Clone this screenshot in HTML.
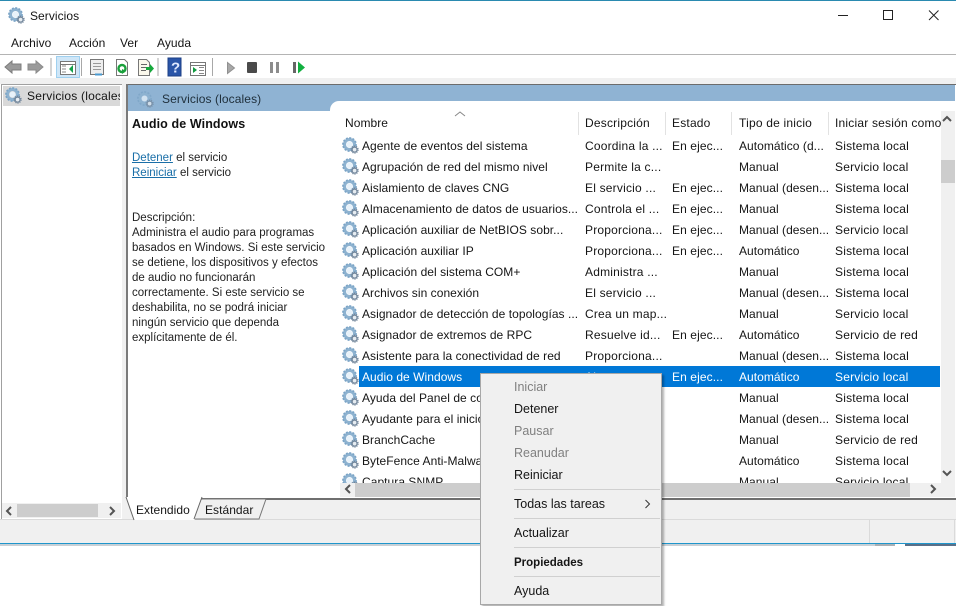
<!DOCTYPE html>
<html lang="es"><head><meta charset="utf-8"><title>Servicios</title>
<style>
html,body{margin:0;padding:0;background:#fff}
#p{position:relative;width:956px;height:606px;overflow:hidden;background:#fff;font-family:"Liberation Sans",sans-serif;font-size:12px;color:#151515;letter-spacing:.05px}
#p div,#p span.a,#p svg{position:absolute}
.t{white-space:nowrap;line-height:16px;height:16px}
.b{background:#f0f0f0}
.r{left:0;width:941px;height:21px}
.r span{position:absolute;top:3px;line-height:16px;white-space:nowrap}
.n{left:362px}.d{left:585px;letter-spacing:.2px}.s{left:672px;letter-spacing:.1px}.i{left:739px}.l{left:835px;letter-spacing:.2px}
.h{letter-spacing:.2px}
.sel{color:#fff}
.dsc{font-size:11.5px;letter-spacing:0;color:#222}
.dsc u{color:#1a6fa8}
.m{left:514px;white-space:nowrap;line-height:16px;font-size:12.5px;letter-spacing:0}
.g{color:#808080}
.sp{left:514px;width:146px;height:1px;background:#d0d0d0}
</style></head><body><div id="p">
<svg width="0" height="0" style="left:0;top:0"><defs>
<symbol id="gear" viewBox="0 0 17 17">
<circle cx="7.5" cy="7.5" r="5" fill="none" stroke="#8db2d0" stroke-width="3"/>
<circle cx="7.5" cy="7.5" r="6.6" fill="none" stroke="#7ba4c6" stroke-width="1.6" stroke-dasharray="2 1.4"/>
<circle cx="7.5" cy="7.5" r="3" fill="#e8f2fa"/>
<circle cx="12.6" cy="12.6" r="2.5" fill="#e6ecf1" stroke="#71859a" stroke-width="1.3"/>
<circle cx="12.6" cy="12.6" r="3.6" fill="none" stroke="#71859a" stroke-width="1" stroke-dasharray="1.2 1.1"/>
</symbol></defs></svg>

<!-- title -->
<div style="left:0;top:0;width:956px;height:1px;background:#2a8ab0"></div>
<svg width="17" height="17" style="left:8px;top:7px"><use href="#gear"/></svg>
<div class="t" style="left:30px;top:8px;font-size:12px">Servicios</div>
<svg width="956" height="30" style="left:0;top:0" fill="none" stroke="#222">
<path d="M838 15.5h10" stroke-width="1"/><rect x="883.5" y="10.5" width="9" height="9"/><path d="M929 10.5l9.5 9.5M938.5 10.5l-9.500 9.500"/></svg>

<!-- menu -->
<div class="t" style="left:11px;top:35px">Archivo</div>
<div class="t" style="left:69px;top:35px">Acción</div>
<div class="t" style="left:120px;top:35px">Ver</div>
<div class="t" style="left:157px;top:35px">Ayuda</div>
<div style="left:0;top:54px;width:956px;height:1px;background:#b4b4b4"></div>

<!-- toolbar -->
<div style="left:56px;top:56px;width:22px;height:20px;background:#cfe6f7;border:1px solid #9fd0ef"></div>
<svg width="320" height="30" style="left:0;top:54px">
<path d="M5 13l7-6v3h9v6h-9v3z" fill="#9a9a9a" stroke="#7c7c7c"/>
<path d="M43 13l-7-6v3h-8v6h8v3z" fill="#9a9a9a" stroke="#8a8a8a"/>
<path d="M51 4v18M81.500 4v18M158 4v18M212.500 4v18" stroke="#a8a8a8"/>
<rect x="60.500" y="7.500" width="15" height="13" fill="#fff" stroke="#777"/><path d="M60 10.500h16" stroke="#777"/><path d="M62 12h4M62 15h4M62 18h4" stroke="#888"/><path d="M73 11v8l-4-4z" fill="#12a04a"/>
<rect x="90.500" y="5.500" width="13" height="15" fill="#eee" stroke="#777"/><path d="M93 9.500h8M93 12.500h8M93 15.500h8" stroke="#999"/><path d="M95 20.500h7" stroke="#4a9ad0" stroke-width="2"/>
<path d="M116.500 5.500h8l3 3v13h-11z" fill="#fff" stroke="#777"/><circle cx="122" cy="14.500" r="3.500" fill="none" stroke="#1aa03c" stroke-width="2.400"/><path d="M122 20l4-3-4-2z" fill="#1aa03c"/>
<path d="M138.500 5.500h8l3 3v13h-11z" fill="#fbf8ec" stroke="#777"/><path d="M141 10.500h6M141 13.500h5M141 16.500h5" stroke="#666"/><path d="M146 13h4v-3l4 4.500-4 4.500v-3h-4z" fill="#16a83c"/>
<rect x="168" y="4" width="13" height="18" fill="#2a55a8"/><rect x="168" y="4" width="13" height="18" fill="none" stroke="#1c3f86"/>
<text x="171" y="18.500" font-family="Liberation Sans" font-size="15" font-weight="bold" fill="#dfe9ff">?</text>
<rect x="190.500" y="8.500" width="15" height="13" fill="#fff" stroke="#777"/><path d="M190 11.500h16" stroke="#777"/><path d="M193 13v6l4-3z" fill="#0f9a3f"/><path d="M199 13.500h5M199 16.500h5M199 19.500h5" stroke="#888"/>
<path d="M227.500 8.500v11l7-5.500z" fill="#a8a8a8" stroke="#909090"/>
<rect x="247" y="8" width="10" height="11" fill="#4a4a4a" rx="1"/>
<rect x="270" y="8" width="3" height="11" fill="#8c8c8c"/><rect x="276" y="8" width="3" height="11" fill="#8c8c8c"/>
<rect x="293" y="8" width="3" height="11" fill="#666"/><path d="M298 7.500v12l7-6z" fill="#12b040"/>
</svg>
<div class="b" style="left:0;top:78px;width:956px;height:6px"></div>

<!-- left pane -->
<div style="left:1px;top:84px;width:120px;height:434px;border:1px solid #a0a0a0;background:#fff"></div>
<div style="left:3px;top:86px;width:117px;height:20px;background:#d9d9d9"></div>
<svg width="17" height="17" style="left:5px;top:87px"><use href="#gear"/></svg>
<div style="left:27px;top:88px;width:93px;height:16px;overflow:hidden;line-height:16px;white-space:nowrap;letter-spacing:.2px">Servicios (locales)</div>
<div class="b" style="left:2px;top:503px;width:119px;height:15px"></div>
<div style="left:17px;top:504px;width:81px;height:13px;background:#cdcdcd"></div>
<svg width="122" height="16" style="left:0;top:503px" fill="none" stroke="#555" stroke-width="2"><path d="M11 4l-4 4 4 4M110 4l4 4-4 4"/></svg>

<!-- gap + right pane -->
<div class="b" style="left:122px;top:84px;width:4px;height:436px"></div>
<div style="left:126px;top:84px;width:2px;height:414px;background:#7a7a7a"></div>
<div style="left:128px;top:84px;width:828px;height:1px;background:#6c6c6c"></div>
<div style="left:128px;top:85px;width:827px;height:26px;background:#8fb3d3"></div>
<svg width="17" height="17" style="left:137px;top:91px;opacity:.75"><use href="#gear"/></svg>
<div class="t" style="left:162px;top:91px;font-size:12px;letter-spacing:.1px;color:#20303c">Servicios (locales)</div>

<div style="left:330px;top:101px;width:625px;height:397px;background:#fff;border-top-left-radius:9px"></div>

<!-- description pane -->
<div class="t" style="left:132px;top:116px;font-weight:bold;font-size:12.500px;letter-spacing:.1px;color:#111">Audio de Windows</div>
<div class="t dsc" style="left:132px;top:150px"><u>Detener</u> el servicio</div>
<div class="t dsc" style="left:132px;top:165px"><u>Reiniciar</u> el servicio</div>
<div class="t dsc" style="left:132px;top:210px">Descripción:</div>
<div class="t dsc" style="left:132px;top:225px">Administra el audio para programas</div>
<div class="t dsc" style="left:132px;top:240px">basados en Windows. Si este servicio</div>
<div class="t dsc" style="left:132px;top:255px">se detiene, los dispositivos y efectos</div>
<div class="t dsc" style="left:132px;top:270px">de audio no funcionarán</div>
<div class="t dsc" style="left:132px;top:285px">correctamente. Si este servicio se</div>
<div class="t dsc" style="left:132px;top:300px">deshabilita, no se podrá iniciar</div>
<div class="t dsc" style="left:132px;top:315px">ningún servicio que dependa</div>
<div class="t dsc" style="left:132px;top:330px">explícitamente de él.</div>

<!-- headers -->
<svg width="20" height="8" style="left:451px;top:110px" fill="none" stroke="#888"><path d="M4 6l5-4 5 4"/></svg>
<div class="t" style="left:345px;top:115px">Nombre</div>
<div class="t h" style="left:585px;top:115px">Descripción</div>
<div class="t h" style="left:672px;top:115px">Estado</div>
<div class="t h" style="left:739px;top:115px">Tipo de inicio</div>
<div class="h" style="left:835px;top:115px;width:106px;height:16px;line-height:16px;overflow:hidden;white-space:nowrap">Iniciar sesión como</div>
<div style="left:578px;top:112px;width:1px;height:23px;background:#e2e2e2"></div>
<div style="left:665px;top:112px;width:1px;height:23px;background:#e2e2e2"></div>
<div style="left:731px;top:112px;width:1px;height:23px;background:#e2e2e2"></div>
<div style="left:828px;top:112px;width:1px;height:23px;background:#e2e2e2"></div>

<!-- rows -->
<div style="left:0;top:0;width:941px;height:483px;overflow:hidden">
<div style="left:359px;top:366px;width:581px;height:21px;background:#0078d7"></div>
<div class="r" style="top:135px"><svg width="17" height="17" style="left:342px;top:2px"><use href="#gear"/></svg><span class="n">Agente de eventos del sistema</span><span class="d">Coordina la ...</span><span class="s">En ejec...</span><span class="i">Automático (d...</span><span class="l">Sistema local</span></div>
<div class="r" style="top:156px"><svg width="17" height="17" style="left:342px;top:2px"><use href="#gear"/></svg><span class="n">Agrupación de red del mismo nivel</span><span class="d">Permite la c...</span><span class="i">Manual</span><span class="l">Servicio local</span></div>
<div class="r" style="top:177px"><svg width="17" height="17" style="left:342px;top:2px"><use href="#gear"/></svg><span class="n">Aislamiento de claves CNG</span><span class="d">El servicio ...</span><span class="s">En ejec...</span><span class="i">Manual (desen...</span><span class="l">Sistema local</span></div>
<div class="r" style="top:198px"><svg width="17" height="17" style="left:342px;top:2px"><use href="#gear"/></svg><span class="n">Almacenamiento de datos de usuarios...</span><span class="d">Controla el ...</span><span class="s">En ejec...</span><span class="i">Manual</span><span class="l">Sistema local</span></div>
<div class="r" style="top:219px"><svg width="17" height="17" style="left:342px;top:2px"><use href="#gear"/></svg><span class="n">Aplicación auxiliar de NetBIOS sobr...</span><span class="d">Proporciona...</span><span class="s">En ejec...</span><span class="i">Manual (desen...</span><span class="l">Servicio local</span></div>
<div class="r" style="top:240px"><svg width="17" height="17" style="left:342px;top:2px"><use href="#gear"/></svg><span class="n">Aplicación auxiliar IP</span><span class="d">Proporciona...</span><span class="s">En ejec...</span><span class="i">Automático</span><span class="l">Sistema local</span></div>
<div class="r" style="top:261px"><svg width="17" height="17" style="left:342px;top:2px"><use href="#gear"/></svg><span class="n">Aplicación del sistema COM+</span><span class="d">Administra ...</span><span class="i">Manual</span><span class="l">Sistema local</span></div>
<div class="r" style="top:282px"><svg width="17" height="17" style="left:342px;top:2px"><use href="#gear"/></svg><span class="n">Archivos sin conexión</span><span class="d">El servicio ...</span><span class="i">Manual (desen...</span><span class="l">Sistema local</span></div>
<div class="r" style="top:303px"><svg width="17" height="17" style="left:342px;top:2px"><use href="#gear"/></svg><span class="n">Asignador de detección de topologías ...</span><span class="d">Crea un map...</span><span class="i">Manual</span><span class="l">Servicio local</span></div>
<div class="r" style="top:324px"><svg width="17" height="17" style="left:342px;top:2px"><use href="#gear"/></svg><span class="n">Asignador de extremos de RPC</span><span class="d">Resuelve id...</span><span class="s">En ejec...</span><span class="i">Automático</span><span class="l">Servicio de red</span></div>
<div class="r" style="top:345px"><svg width="17" height="17" style="left:342px;top:2px"><use href="#gear"/></svg><span class="n">Asistente para la conectividad de red</span><span class="d">Proporciona...</span><span class="i">Manual (desen...</span><span class="l">Sistema local</span></div>
<div class="r sel" style="top:366px"><svg width="17" height="17" style="left:342px;top:2px"><use href="#gear"/></svg><span class="n">Audio de Windows</span><span class="d">Al</span><span class="s">En ejec...</span><span class="i">Automático</span><span class="l">Servicio local</span></div>
<div class="r" style="top:387px"><svg width="17" height="17" style="left:342px;top:2px"><use href="#gear"/></svg><span class="n">Ayuda del Panel de control</span><span class="i">Manual</span><span class="l">Sistema local</span></div>
<div class="r" style="top:408px"><svg width="17" height="17" style="left:342px;top:2px"><use href="#gear"/></svg><span class="n">Ayudante para el inicio</span><span class="i">Manual (desen...</span><span class="l">Sistema local</span></div>
<div class="r" style="top:429px"><svg width="17" height="17" style="left:342px;top:2px"><use href="#gear"/></svg><span class="n">BranchCache</span><span class="i">Manual</span><span class="l">Servicio de red</span></div>
<div class="r" style="top:450px"><svg width="17" height="17" style="left:342px;top:2px"><use href="#gear"/></svg><span class="n">ByteFence Anti-Malware</span><span class="i">Automático</span><span class="l">Sistema local</span></div>
<div class="r" style="top:471px"><svg width="17" height="17" style="left:342px;top:2px"><use href="#gear"/></svg><span class="n">Captura SNMP</span><span class="i">Manual</span><span class="l">Servicio local</span></div>
</div>

<!-- scrollbars -->
<div class="b" style="left:941px;top:111px;width:14px;height:372px"></div>
<div style="left:941px;top:160px;width:14px;height:23px;background:#cdcdcd"></div>
<div class="b" style="left:340px;top:483px;width:615px;height:14px"></div>
<div style="left:355px;top:483px;width:555px;height:14px;background:#cdcdcd"></div>
<svg width="620" height="400" style="left:336px;top:110px" fill="none" stroke="#555" stroke-width="2"><path d="M607 11l4-4 4 4M607 361l4 4 4-4M14 375l-4 4 4 4M595 375l4 4-4 4"/></svg>
<div style="left:128px;top:498px;width:828px;height:2px;background:#6f6f6f"></div>

<!-- tabs / status -->
<div class="b" style="left:126px;top:500px;width:830px;height:43px"></div>
<div style="left:0;top:520px;width:126px;height:23px;background:#f0f0f0"></div>
<div style="left:0;top:519px;width:956px;height:1px;background:#dadada"></div>
<svg width="150" height="26" style="left:122px;top:495px">
<path d="M4 2l8 23h60l8-23z" fill="#fff"/>
<path d="M4 2l8 23M72 24l8-22" stroke="#666" fill="none"/>
<path d="M80 4h64l-7 20H73" fill="#f0f0f0" stroke="#777"/>
</svg>
<div class="t" style="left:136px;top:502px">Extendido</div>
<div class="t" style="left:205px;top:502px">Estándar</div>
<div style="left:869px;top:520px;width:1px;height:23px;background:#dadada"></div>
<div style="left:954px;top:520px;width:1px;height:23px;background:#dadada"></div>
<div style="left:0;top:546px;width:956px;height:60px;background:#fff"></div>
<div style="left:0;top:543px;width:956px;height:1px;background:#1f96cc"></div>
<div style="left:0;top:544px;width:875px;height:2px;background:#c8d0d6"></div>
<div style="left:875px;top:544px;width:20px;height:2px;background:#aab0b5"></div>
<div style="left:905px;top:544px;width:51px;height:2px;background:#5a7088"></div>

<!-- context menu -->
<div style="left:480px;top:373px;width:180px;height:230px;background:#f0f0f0;border:1px solid #a8a8a8;box-shadow:2px 2px 2px rgba(0,0,0,.3)"></div>
<div class="m g" style="top:379px">Iniciar</div>
<div class="m" style="top:401px">Detener</div>
<div class="m g" style="top:423px">Pausar</div>
<div class="m g" style="top:445px">Reanudar</div>
<div class="m" style="top:467px">Reiniciar</div>
<div class="sp" style="top:489px"></div>
<div class="m" style="top:496px">Todas las tareas</div>
<svg width="8" height="10" style="left:644px;top:499px" fill="none" stroke="#333"><path d="M1.500 1l4 4-4 4"/></svg>
<div class="sp" style="top:518px"></div>
<div class="m" style="top:525px">Actualizar</div>
<div class="sp" style="top:547px"></div>
<div class="m" style="top:555px;font-weight:bold;font-size:11.500px">Propiedades</div>
<div class="sp" style="top:576px"></div>
<div class="m" style="top:583px">Ayuda</div>
</div></body></html>
